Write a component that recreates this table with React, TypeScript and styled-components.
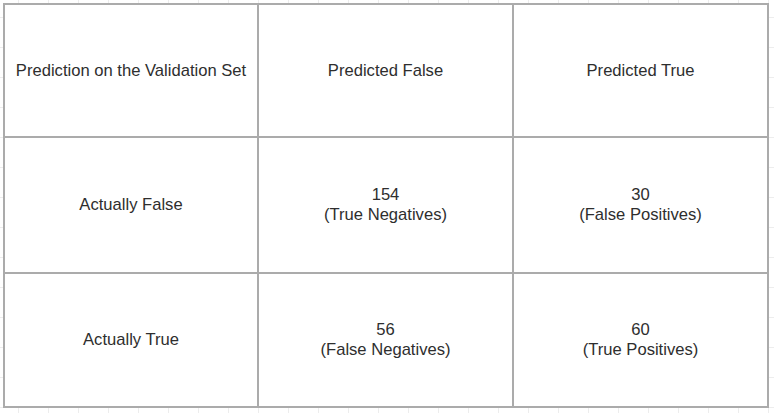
import styled, { createGlobalStyle } from 'styled-components'

const GlobalStyle = createGlobalStyle`
  html, body {
    margin: 0;
    padding: 0;
    background: #ffffff;
  }
  body {
    width: 774px;
    height: 413px;
    overflow: hidden;
    font-family: 'Liberation Sans', Arial, sans-serif;
  }
`

const Canvas = styled.div`
  width: 774px;
  height: 413px;
  box-sizing: border-box;
  padding: 3px 0 0 3px;
  background-color: #ffffff;
  background-image:
    linear-gradient(to right, #ededed 1px, transparent 1px),
    linear-gradient(to bottom, #ededed 1px, transparent 1px);
  background-size: 30px 30px;
  background-position: 18px 17px;
`

// tracks include each cell's right/bottom border
const Matrix = styled.div`
  display: grid;
  grid-template-columns: 254px 255px 255px;
  grid-template-rows: 133px 136px 134px;
  width: max-content;
  border-left: 2px solid #ababab;
  border-top: 2px solid #ababab;
  background: #ffffff;
`

const Cell = styled.div`
  display: flex;
  flex-direction: column;
  align-items: center;
  justify-content: center;
  border-right: 2px solid #ababab;
  border-bottom: 2px solid #ababab;
  color: #2e2e2e;
  font-size: 16.6px;
  line-height: 20px;
  text-align: center;
  white-space: nowrap;
`

const rows = [
  ['Prediction on the Validation Set', 'Predicted False', 'Predicted True'],
  ['Actually False', ['154', '(True Negatives)'], ['30', '(False Positives)']],
  ['Actually True', ['56', '(False Negatives)'], ['60', '(True Positives)']],
]

const App = () => {
  return (
    <>
      <GlobalStyle />
      <Canvas>
        <Matrix>
          {rows.map((row, r) =>
            row.map((cell, c) => (
              <Cell key={`${r}-${c}`}>
                {Array.isArray(cell) ? cell.map((line) => <span key={line}>{line}</span>) : cell}
              </Cell>
            )),
          )}
        </Matrix>
      </Canvas>
    </>
  )
}

export default App
